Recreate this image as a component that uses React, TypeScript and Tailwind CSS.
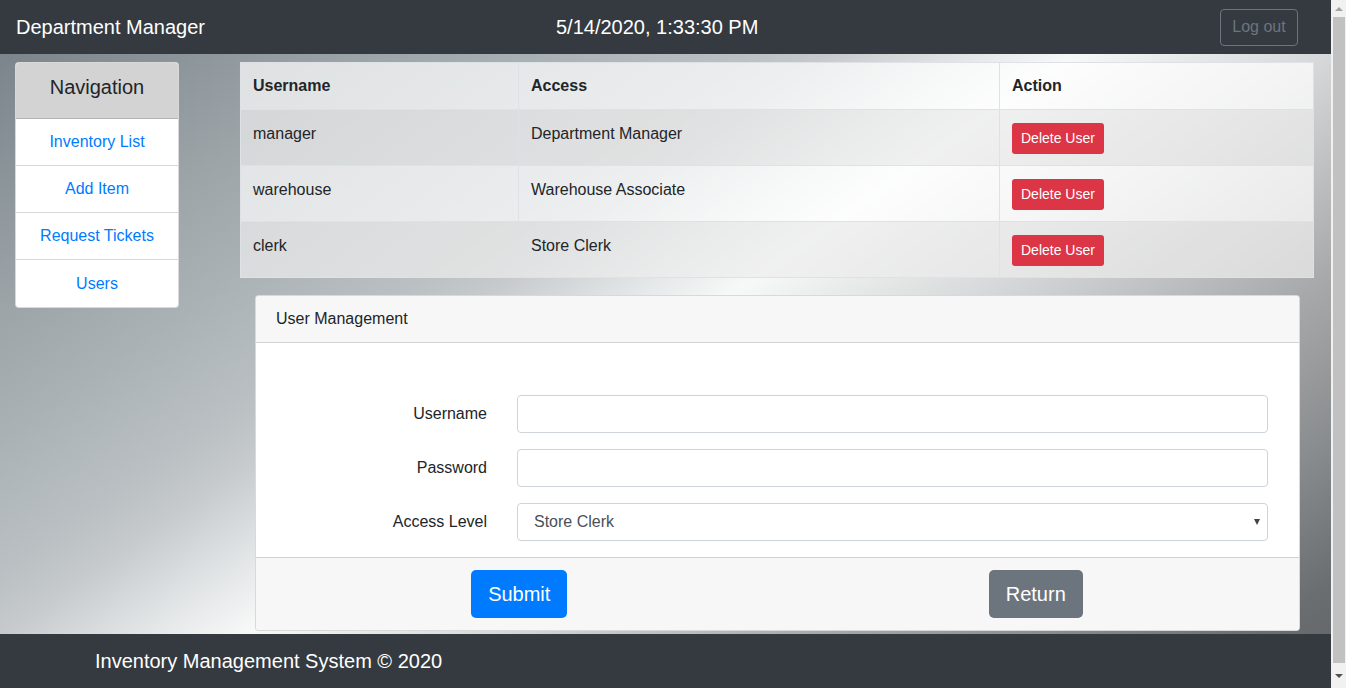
import React from "react";

const users = [
  { name: "manager", access: "Department Manager" },
  { name: "warehouse", access: "Warehouse Associate" },
  { name: "clerk", access: "Store Clerk" },
];

const navItems = ["Inventory List", "Add Item", "Request Tickets", "Users"];

export default function App() {
  return (
    <div
      className="relative w-[1331px] min-h-[696px] text-[#212529] bg-[linear-gradient(145deg,#78828a_0%,#7c868c_4%,#9ca4a8_19%,#b9bfc2_35%,#c6cacc_39%,#e3e6e7_45%,#f7f8f8_49.5%,#e9eaea_54%,#d8d9da_60%,#a8a9aa_74%,#8a8d8f_84%,#6a6e70_93%,#5f6365_100%)]"
      style={{ fontFamily: '"Liberation Sans", Arial, sans-serif' }}
    >
      {/* Header */}
      <header className="h-[54px] bg-[#343a40] flex items-center pl-4 pr-[33px]">
        <div className="w-[540px] text-[20px] leading-[30px] text-white">Department Manager</div>
        <div className="text-[20px] leading-[30px] text-white">5/14/2020, 1:33:30 PM</div>
        <button className="ml-auto h-[37px] w-[78px] rounded border border-[#6c757d] text-[16px] text-[#6c757d] bg-transparent">
          Log out
        </button>
      </header>

      {/* Main */}
      <div className="flex items-start pt-2 pb-[65px]">
        {/* Nav */}
        <div className="ml-[15px] w-[164px] rounded border border-black/15 bg-white overflow-hidden">
          <div className="h-[56px] bg-[#d3d3d3] flex items-start justify-center pt-[9px] text-[20px] leading-[30px] text-[#212529] border-b border-black/15">
            Navigation
          </div>
          {navItems.map((item, i) => (
            <div
              key={item}
              className={`h-[47px] flex items-center justify-center text-[16px] text-[#007bff] ${
                i < navItems.length - 1 ? "border-b border-black/15" : ""
              }`}
            >
              {item}
            </div>
          ))}
        </div>

        {/* Content */}
        <div className="ml-[61px] w-[1074px]">
          <table className="w-full border-collapse bg-white/70 text-[16px]">
            <thead>
              <tr className="h-[47px]">
                <th className="w-[278px] border border-[#dee2e6] text-left font-bold px-3 align-middle">Username</th>
                <th className="w-[481px] border border-[#dee2e6] text-left font-bold px-3 align-middle">Access</th>
                <th className="border border-[#dee2e6] text-left font-bold px-3 align-middle">Action</th>
              </tr>
            </thead>
            <tbody>
              {users.map((u, i) => (
                <tr key={u.name} className={`h-[55px] ${i % 2 === 0 ? "bg-black/5" : ""}`}>
                  <td className="border border-[#dee2e6] px-3 pt-3 align-top leading-6">{u.name}</td>
                  <td className="border border-[#dee2e6] px-3 pt-3 align-top leading-6">{u.access}</td>
                  <td className="border border-[#dee2e6] px-3 pt-[13px] pb-[11px] align-top">
                    <button className="block h-[31px] px-[9px] rounded-[3px] bg-[#dc3545] text-white text-[14px]">
                      Delete User
                    </button>
                  </td>
                </tr>
              ))}
            </tbody>
          </table>

          {/* Card */}
          <div className="mt-[17px] ml-[15px] mr-[14px] rounded border border-black/15 bg-white overflow-hidden">
            <div className="h-[47px] bg-[#f7f7f7] border-b border-black/15 flex items-center px-5 text-[16px]">
              User Management
            </div>
            <div className="px-5 pt-[52px] pb-4 flex flex-col gap-4">
              <div className="flex items-center">
                <label className="w-[211px] text-right text-[16px]">Username</label>
                <input className="ml-[30px] mr-[11px] flex-1 h-[38px] rounded border border-[#ced4da] bg-white px-3 outline-none" />
              </div>
              <div className="flex items-center">
                <label className="w-[211px] text-right text-[16px]">Password</label>
                <input type="password" className="ml-[30px] mr-[11px] flex-1 h-[38px] rounded border border-[#ced4da] bg-white px-3 outline-none" />
              </div>
              <div className="flex items-center">
                <label className="w-[211px] text-right text-[16px]">Access Level</label>
                <div className="relative ml-[30px] mr-[11px] flex-1 h-[38px]">
                  <select className="w-full h-full appearance-none rounded border border-[#ced4da] bg-white pl-4 text-[16px] text-[#495057] outline-none">
                    <option>Store Clerk</option>
                  </select>
                  <span className="pointer-events-none absolute right-[8px] top-[16px] w-0 h-0 border-l-[3.5px] border-r-[3.5px] border-t-[6px] border-l-transparent border-r-transparent border-t-[#444]" />
                </div>
              </div>
            </div>
            <div className="bg-[#f7f7f7] border-t border-black/15 grid grid-cols-2 px-[5px] pt-3 pb-3">
              <div className="flex justify-center">
                <button className="h-[48px] px-[17px] rounded-[5px] bg-[#007bff] text-white text-[20px]">Submit</button>
              </div>
              <div className="flex justify-center">
                <button className="h-[48px] px-[17px] rounded-[5px] bg-[#6c757d] text-white text-[20px]">Return</button>
              </div>
            </div>
          </div>
        </div>
      </div>

      {/* Footer */}
      <footer className="fixed bottom-0 left-0 w-[1331px] h-[54px] bg-[#343a40] flex items-center pl-[95px]">
        <span className="text-[20px] text-white">Inventory Management System © 2020</span>
      </footer>

      {/* Browser scrollbar */}
      <div className="fixed top-0 right-0 w-[15px] h-[688px] bg-[#f1f1f1] flex flex-col items-center">
        <div className="h-[17px] w-full flex items-center justify-center">
          <span className="w-0 h-0 border-l-[4px] border-r-[4px] border-b-[4px] border-l-transparent border-r-transparent border-b-[#a3a3a3]" />
        </div>
        <div className="w-[12px] h-[646px] bg-[#c1c1c1]" />
        <div className="flex-1 w-full flex items-center justify-center">
          <span className="w-0 h-0 border-l-[4px] border-r-[4px] border-t-[4px] border-l-transparent border-r-transparent border-t-[#505050]" />
        </div>
      </div>
    </div>
  );
}
